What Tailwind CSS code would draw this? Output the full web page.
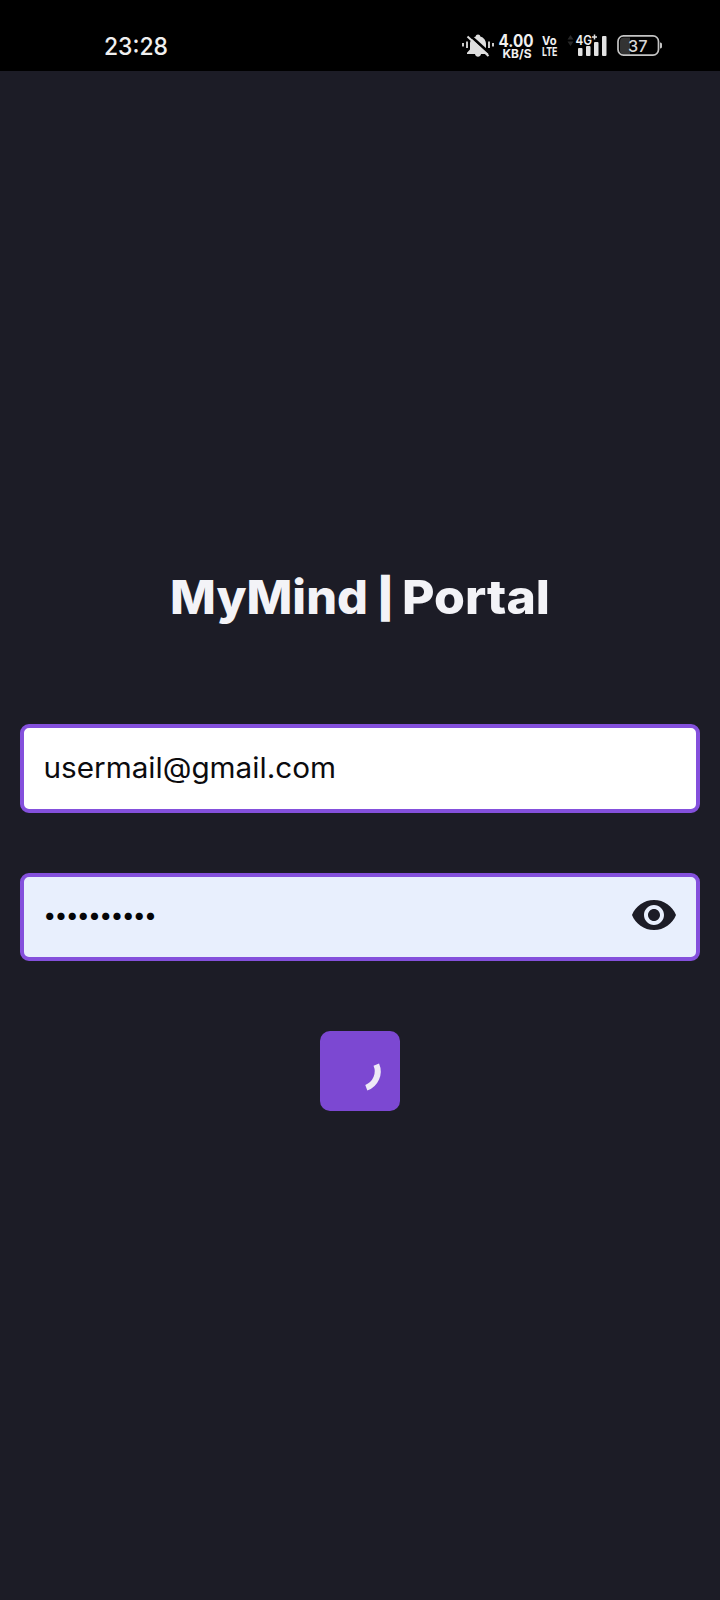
<!DOCTYPE html>
<html lang="en">
<head>
<meta charset="utf-8">
<title>MyMind | Portal</title>
<script src="https://cdn.jsdelivr.net/npm/@tailwindcss/browser@4"></script>
</head>
<body class="w-[720px] h-[1600px] bg-[#1c1c26] overflow-hidden font-['Inter',sans-serif]">
<header class="h-[71px] bg-black">
<svg class="block" width="720" height="71" viewBox="0 0 720 71" fill="#f0f0f0">
  <text x="104" y="54.500" font-size="24.500" font-weight="500" textLength="64" lengthAdjust="spacingAndGlyphs">23:28</text>
  <!-- muted bell -->
  <g fill="#dedede">
    <path d="M478 34.500c1.300 0 2.200.8 2.300 2 3.600 1 5.700 4 5.700 7.600v5.400l3 3.200v1.300h-22v-1.300l3-3.200v-5.400c0-3.600 2.100-6.600 5.700-7.600.1-1.200 1-2 2.300-2zM475 54h6c-.3 1.900-1.500 2.700-3 2.700s-2.700-.8-3-2.700z"/>
    <path d="M469.500 35l21 19" stroke="#000" stroke-width="2.600"/>
    <path d="M467.500 36.500l21 19.500" stroke="#dedede" stroke-width="2"/>
    <path d="M463 43v3.500M467 41.500v6.500M489 41.500v6.500M493 43v3.500" stroke="#dedede" stroke-width="1.800"/>
  </g>
  <text x="498.500" y="46.500" font-size="17" font-weight="700" textLength="35" lengthAdjust="spacingAndGlyphs">4.00</text>
  <text x="502.500" y="57.500" font-size="12" font-weight="700" textLength="29" lengthAdjust="spacingAndGlyphs">KB/S</text>
  <text x="542" y="45" font-size="12" font-weight="700" textLength="14.500" lengthAdjust="spacingAndGlyphs">Vo</text>
  <text x="542" y="56" font-size="12" font-weight="700" textLength="15.500" lengthAdjust="spacingAndGlyphs">LTE</text>
  <path d="M567.500 39.500l3-4.500 3 4.500zM567.500 41.500l3 4.500 3-4.500z" fill="#282828"/>
  <g fill="#e2e2e2">
    <rect x="578" y="48" width="4.500" height="8" rx="1"/>
    <rect x="586" y="46" width="4.500" height="10" rx="1"/>
    <rect x="594" y="42" width="4.500" height="14" rx="1"/>
    <rect x="602" y="36" width="4.500" height="20" rx="1"/>
  </g>
  <text x="575.500" y="45" font-size="13.500" font-weight="600" textLength="16.500" lengthAdjust="spacingAndGlyphs">4G</text>
  <path d="M594.500 34.500v5M592 37h5" stroke="#e2e2e2" stroke-width="1.500"/>
  <path d="M624 37.500h6v17h-6a4 4 0 0 1-4-4v-9a4 4 0 0 1 4-4z" fill="#333"/>
  <rect x="618" y="35.900" width="40.500" height="19.200" rx="5.500" fill="none" stroke="#c4c4c4" stroke-width="1.700"/>
  <path d="M660 42.500c2 0 2 1 2 3s0 3-2 3z" fill="#c4c4c4"/>
  <text x="628" y="51.500" font-size="16.500" font-weight="500" fill="#d6d6d6" textLength="19.500" lengthAdjust="spacingAndGlyphs">37</text>
</svg>
</header>
<main class="flex flex-col items-center px-5 pt-[489px]">
  <h1 class="h-[72px] w-[374px] font-extrabold">
    <svg class="block overflow-visible" width="374" height="72" fill="#f3f3f7" font-size="47">
      <text x="-3" y="54" textLength="198" lengthAdjust="spacingAndGlyphs">MyMind</text>
      <text x="212.500" y="52" font-size="38" font-weight="900" stroke="#f3f3f7" stroke-width="1.500" text-anchor="middle">|</text>
      <text x="229" y="54" textLength="148" lengthAdjust="spacingAndGlyphs">Portal</text>
    </svg>
  </h1>
  <div class="mt-[92px] w-full h-[89px] rounded-[9px] border-4 border-[#8450dc] bg-white flex items-center">
    <svg class="block" width="400" height="80" fill="#0b0b0e">
      <text x="19.500" y="48.500" font-size="28" textLength="292.500" lengthAdjust="spacingAndGlyphs">usermail@gmail.com</text>
    </svg>
  </div>
  <div class="mt-[60px] w-full h-[88px] rounded-[9px] border-4 border-[#8450dc] bg-[#e8effd] flex items-center justify-between pr-[18px]">
    <svg class="block" width="200" height="80" fill="#050507">
      <text y="45.800" font-size="23" text-anchor="middle" x="25.700 36.900 48.100 59.300 70.500 81.700 92.900 104.100 115.300 126.500">••••••••••</text>
    </svg>
    <svg class="block -mt-1" width="48" height="48" viewBox="0 0 24 24" fill="#1c1c26"><path d="M12 4.500C7 4.500 2.730 7.610 1 12c1.730 4.390 6 7.500 11 7.500s9.270-3.110 11-7.500c-1.730-4.390-6-7.500-11-7.500zM12 17c-2.760 0-5-2.240-5-5s2.240-5 5-5 5 2.240 5 5-2.240 5-5 5zm0-8c-1.660 0-3 1.340-3 3s1.340 3 3 3 3-1.340 3-3-1.340-3-3-3z"/></svg>
  </div>
  <div class="mt-[70px] size-20 rounded-[10px] bg-[#7c48d2]">
    <svg class="block" width="80" height="80" fill="none"><path d="M56.300 33.600A17.300 17.300 0 0 1 46.300 56.700" stroke="#eeeaf6" stroke-width="6"/></svg>
  </div>
</main>
</body>
</html>
